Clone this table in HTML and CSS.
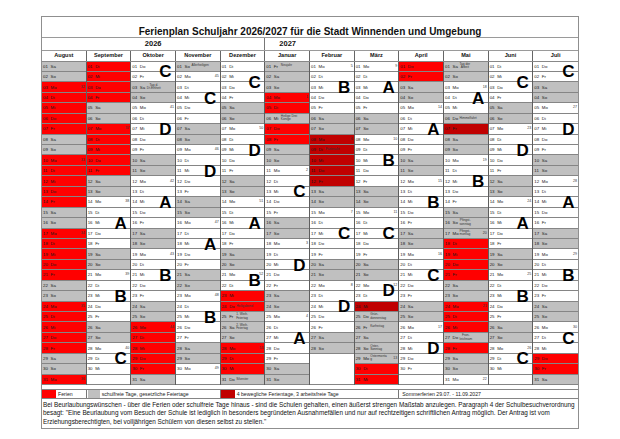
FILE: index.html
```html
<!DOCTYPE html>
<html lang="de">
<head>
<meta charset="utf-8">
<title>Ferienplan Schuljahr 2026/2027</title>
<link rel="stylesheet" href="styles.css">
</head>
<body>
<div class="sheet">
  <div class="title">Ferienplan Schuljahr 2026/2027 für die Stadt Winnenden und Umgebung</div>
  <div class="years">
    <div class="y26">2026</div>
    <div class="y27">2027</div>
    <div class="yrest"></div>
  </div>
  <div class="heads">
    <div class="mh">August</div><div class="mh">September</div><div class="mh">Oktober</div><div class="mh">November</div><div class="mh">Dezember</div><div class="mh">Januar</div><div class="mh">Februar</div><div class="mh">März</div><div class="mh">April</div><div class="mh">Mai</div><div class="mh">Juni</div><div class="mh">Juli</div>
  </div>
  <div class="cal" id="cal"></div>
  <div class="gap"></div>
  <div class="legend">
    <div class="lg lg1"><span class="sw sw-red"></span><span class="lt">Ferien</span></div>
    <div class="lg lg2"><span class="sw sw-gray"></span><span class="lt">schulfreie Tage, gesetzliche Feiertage</span></div>
    <div class="lg lg3"><span class="sw sw-dark"></span><span class="lt">4 bewegliche Ferientage, 3 arbeitsfreie Tage</span></div>
    <div class="lg lg4"><span class="lt">Sommerferien 29.07. - 11.09.2027</span></div>
  </div>
  <div class="note">Bei Beurlaubungswünschen - über die Ferien oder schulfreie Tage hinaus - sind die Schulen gehalten, einen äußerst strengen Maßstab anzulegen. Paragraph 4 der Schulbesuchverordnung<br>besagt: "Eine Beurlaubung vom Besuch der Schule ist lediglich in besonders begründeten Ausnahmefällen und nur auf rechtzeitigen schriftlichen Antrag möglich. Der Antrag ist vom<br>Erziehungsberechtigten, bei volljährigen Schülern von diesen selbst zu stellen."</div>
</div>
<script src="app.js"></script>
</body>
</html>
```

FILE: styles.css
```css
* { box-sizing: border-box; }
body {
  margin: 0;
  background: #fff;
  font-family: "Liberation Sans", Arial, sans-serif;
  color: #111;
}
.sheet {
  margin: 16px 0 0 41px;
  width: 538px;
  border: 1px solid #8f8f8f;
}
.title {
  height: 21px;
  padding-top: 9px;
  line-height: 11px;
  font-size: 10px;
  font-weight: bold;
  text-align: center;
  border-bottom: 1px solid #9a9a9a;
}
.years {
  display: grid;
  grid-template-columns: repeat(12, 1fr);
  height: 13px;
  border-bottom: 1px solid #9a9a9a;
  font-size: 7.5px;
  font-weight: bold;
  line-height: 12px;
}
.y26 { grid-column: 1 / 6; text-align: center; border-right: 1px solid #777; }
.y27 { grid-column: 6 / 7; text-align: center; }
.yrest { grid-column: 7 / 13; }
.heads {
  display: grid;
  grid-template-columns: repeat(12, 1fr);
  height: 10.5px;
  border-bottom: 1px solid #888;
}
.mh {
  font-size: 5.6px;
  font-weight: bold;
  text-align: center;
  line-height: 9.5px;
  border-right: 1px solid #666;
}
.mh:last-child { border-right: 0; }
.cal {
  display: grid;
  grid-template-columns: repeat(12, 1fr);
}
.col { border-right: 1px solid #5e5e5e; min-width: 0; }
.col:last-child { border-right: 0; }
.day {
  position: relative;
  display: flex;
  align-items: center;
  height: 10.45px;
  border-bottom: 1px solid #858585;
  font-size: 4.4px;
  line-height: 5px;
  color: #1a1a1a;
  white-space: nowrap;
}
.day.g { background: #c0c0c0; }
.day.r { background: #ff0000; }
.day.d { background: #c00000; }
.day.empty { border-bottom-color: transparent; }
.day.empty.last { border-bottom-color: #858585; }
.dn { width: 8.5px; padding-left: 1px; flex: none; }
.wd { width: 7px; flex: none; }
.lbl {
  font-size: 3.2px;
  line-height: 3.5px;
  color: #333;
  flex: none;
}
.lbl.c { text-align: center; }
.kw {
  margin-left: auto;
  padding-right: 1px;
  font-size: 3.6px;
  color: #333;
}
.mark {
  position: absolute;
  z-index: 2;
  right: 3.5px;
  top: 50%;
  transform: translateY(-50%);
  font-size: 17px;
  line-height: 17px;
  font-weight: bold;
  color: #000;
}
.mark.low { transform: translateY(-50%) translateY(5px); }
.gap { height: 4px; }
.legend {
  display: grid;
  grid-template-columns: repeat(12, 1fr);
  height: 10px;
  border-top: 1px solid #858585;
  border-bottom: 1px solid #858585;
  font-size: 5.2px;
  line-height: 9px;
}
.lg { display: flex; align-items: stretch; border-right: 1px solid #777; white-space: nowrap; overflow: hidden; }
.lg1 { grid-column: 1 / 2; }
.lg2 { grid-column: 2 / 5; }
.lg3 { grid-column: 5 / 9; }
.lg4 { grid-column: 9 / 13; border-right: 0; }
.sw { flex: none; width: 14px; }
.sw-red { background: #ff0000; }
.sw-gray { background: #c0c0c0; width: 12px; margin-left: 1px; }
.sw-dark { background: #c00000; }
.lt { padding-left: 2px; color: #222; }
.lg4 .lt { padding-left: 3px; }
.note {
  height: 29px;
  padding: 2px 0 0 1px;
  font-size: 6.36px;
  line-height: 8.4px;
  color: #111;
  white-space: nowrap;
}
```

FILE: app.js
```js
(function () {
  var months = [
    [2026, 7], [2026, 8], [2026, 9], [2026, 10], [2026, 11],
    [2027, 0], [2027, 1], [2027, 2], [2027, 3], [2027, 4], [2027, 5], [2027, 6]
  ];
  var WD = ['So', 'Mo', 'Di', 'Mi', 'Do', 'Fr', 'Sa'];

  function key(y, m, d) { return y * 10000 + (m + 1) * 100 + d; }

  var redRanges = [
    [20260801, 20260911], [20261026, 20261030], [20261223, 20270108],
    [20270330, 20270402], [20270518, 20270528], [20270729, 20270731]
  ];
  var darkRanges = [[20270208, 20270212], [20270324, 20270324], [20270507, 20270507]];
  var holidays = {
    20261003: 'Tag d.|Dt.Einheit', 20261101: 'Allerheiligen',
    20261224: null, 20261225: '1. Weih.|Feiertag', 20261226: '2. Weih.|Feiertag',
    20261231: 'Silvester', 20270101: 'Neujahr', 20270106: 'Heilige Drei|Könige',
    20270325: 'Grün-|donnerstag', 20270326: 'Karfreitag', 20270328: 'Oster-|Sonntag',
    20270329: 'Ostermonta|g', 20270501: 'Tag der|Arbeit', 20270506: 'Himmelfahrt',
    20270516: 'Pfingst-|sonntag', 20270517: 'Pfingst-|montag', 20270527: 'Fron-|leichnam'
  };
  var extraLabels = { 20261224: 'Heiligabend', 20270209: 'Fastnacht' };
  var centered = { 20261003: true, 20270501: true, 20270516: true, 20270517: true, 20270527: true };

  var marks = [
    [],
    [[16, 'A'], [23, 'B'], [29, 'C']],
    [[1, 'C', 1], [7, 'D'], [14, 'A'], [21, 'B']],
    [[4, 'C'], [11, 'D'], [18, 'A'], [25, 'B']],
    [[2, 'C', 1], [9, 'D'], [16, 'A'], [21, 'B', 1]],
    [[13, 'C'], [20, 'D'], [27, 'A']],
    [[3, 'B'], [17, 'C'], [24, 'D']],
    [[3, 'A'], [10, 'B'], [17, 'C'], [22, 'D', 1]],
    [[7, 'A'], [14, 'B'], [21, 'C'], [28, 'D']],
    [[4, 'A'], [12, 'B']],
    [[2, 'C', 1], [9, 'D'], [16, 'A'], [23, 'B'], [29, 'C']],
    [[1, 'C', 1], [7, 'D'], [14, 'A'], [21, 'B'], [27, 'C']]
  ];

  function inRanges(k, ranges) {
    for (var i = 0; i < ranges.length; i++) {
      if (k >= ranges[i][0] && k <= ranges[i][1]) return true;
    }
    return false;
  }
  function isoWeek(y, m, d) {
    var dt = new Date(Date.UTC(y, m, d));
    var n = dt.getUTCDay() || 7;
    dt.setUTCDate(dt.getUTCDate() + 4 - n);
    var ys = new Date(Date.UTC(dt.getUTCFullYear(), 0, 1));
    return Math.ceil(((dt - ys) / 86400000 + 1) / 7);
  }
  function pad(n) { return n < 10 ? '0' + n : '' + n; }
  function el(tag, cls, text) {
    var e = document.createElement(tag);
    if (cls) e.className = cls;
    if (text != null) e.textContent = text;
    return e;
  }

  var cal = document.getElementById('cal');
  months.forEach(function (mo, ci) {
    var y = mo[0], m = mo[1];
    var col = el('div', 'col');
    var dim = new Date(y, m + 1, 0).getDate();
    var mk = {};
    marks[ci].forEach(function (x) { mk[x[0]] = x; });
    for (var d = 1; d <= 31; d++) {
      var cell;
      if (d > dim) {
        cell = el('div', 'day empty' + (d === 31 ? ' last' : ''));
        col.appendChild(cell);
        continue;
      }
      var k = key(y, m, d);
      var wd = new Date(y, m, d).getDay();
      var cls = '';
      if (wd === 0 || wd === 6 || (k in holidays && holidays[k] !== null)) cls = 'g';
      else if (inRanges(k, darkRanges)) cls = 'd';
      else if (inRanges(k, redRanges)) cls = 'r';
      cell = el('div', 'day ' + cls);
      cell.appendChild(el('span', 'dn', pad(d)));
      cell.appendChild(el('span', 'wd', WD[wd]));
      var label = holidays[k] || extraLabels[k];
      if (label) {
        var lb = el('span', 'lbl' + (centered[k] ? ' c' : ''));
        label.split('|').forEach(function (ln, i) {
          if (i) lb.appendChild(document.createElement('br'));
          lb.appendChild(document.createTextNode(ln));
        });
        cell.appendChild(lb);
      }
      if (wd === 1) cell.appendChild(el('span', 'kw', String(isoWeek(y, m, d))));
      if (mk[d]) cell.appendChild(el('span', 'mark' + (mk[d][2] ? ' low' : ''), mk[d][1]));
      col.appendChild(cell);
    }
    cal.appendChild(col);
  });
})();
```
